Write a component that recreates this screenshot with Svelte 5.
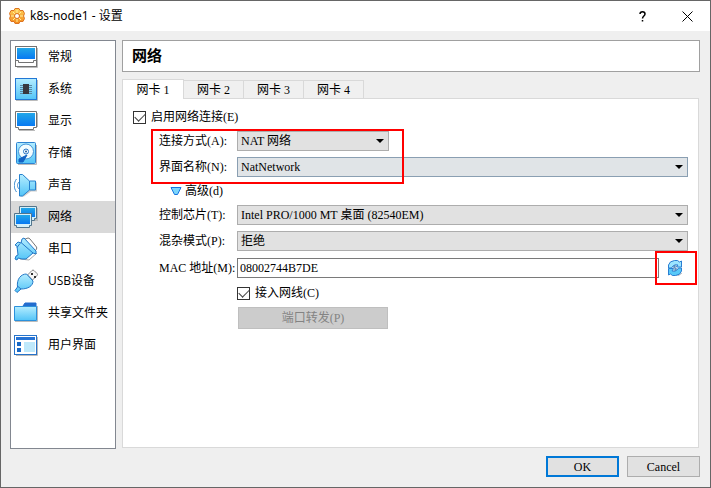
<script lang="ts">
	type IconName =
		| 'general'
		| 'system'
		| 'display'
		| 'storage'
		| 'audio'
		| 'network'
		| 'serial'
		| 'usb'
		| 'folder'
		| 'interface';

	const pages: { icon: IconName; label: string }[] = [
		{ icon: 'general', label: '常规' },
		{ icon: 'system', label: '系统' },
		{ icon: 'display', label: '显示' },
		{ icon: 'storage', label: '存储' },
		{ icon: 'audio', label: '声音' },
		{ icon: 'network', label: '网络' },
		{ icon: 'serial', label: '串口' },
		{ icon: 'usb', label: 'USB设备' },
		{ icon: 'folder', label: '共享文件夹' },
		{ icon: 'interface', label: '用户界面' }
	];

	const tabs = ['网卡 1', '网卡 2', '网卡 3', '网卡 4'];

	let page = $state('网络');
	let tab = $state(0);
	let enabled = $state(true);
	let cable = $state(true);
	let mac = $state('08002744B7DE');

	function newMac() {
		const tail = Math.floor(Math.random() * 0xffffff)
			.toString(16)
			.padStart(6, '0');
		mac = '080027' + tail.toUpperCase();
	}
</script>

{#snippet pageIcon(name: IconName)}
	<svg class="page-icon" viewBox="0 0 24 24" aria-hidden="true">
		{#if name === 'general'}
			<path d="M3 22.5h20.5V3" fill="none" stroke="#bbb" />
			<rect x="1.5" y="1.5" width="21" height="20" fill="#fff" stroke="#737373" />
			<rect x="3" y="3" width="18" height="11" fill="url(#screen)" />
			<path d="M1.5 15.5h3v2h15v-2h3" fill="none" stroke="#737373" />
		{:else if name === 'system'}
			<path d="M2 23.5h21.5V3" fill="none" stroke="#bbb" />
			<rect x="1.5" y="1.5" width="21" height="21" fill="url(#aqua)" stroke="#2277d5" />
			<path d="M6 8.5h12M6 10.5h12M6 12.5h12M6 14.5h12M6 16.5h12" stroke="#5a88a4" />
			<rect x="9" y="7" width="6" height="10" fill="#38383f" />
		{:else if name === 'display'}
			<path d="M5 21.5h16M23.5 4v14" stroke="#bbb" />
			<path d="M1.5 2.5h21v16h-3v2h-15v-2h-3z" fill="#fff" stroke="#737373" />
			<rect x="3" y="4" width="18" height="13" fill="url(#screen)" />
		{:else if name === 'storage'}
			<path d="M4 23.5h18.5V4" fill="none" stroke="#bbb" />
			<rect x="2.5" y="1.5" width="19" height="21" rx="1" fill="url(#aqua)" stroke="#2d83d2" />
			<circle cx="12" cy="10.5" r="7.5" fill="#f2fcff" stroke="#4294d8" />
			<circle cx="12" cy="10.5" r="2.5" fill="#fff" stroke="#2676c8" />
			<circle cx="12" cy="10.5" r="1" fill="#17589e" />
			<path d="M13 14l-8 4v3h4z" fill="#1262c4" stroke="#1262c4" stroke-linejoin="round" />
		{:else if name === 'audio'}
			<path d="M7 2.5h3l6 7h7v9h-6l-7 5H7z" fill="#999" opacity="0.5" />
			<path d="M5.5 1.5h3l7 6.5h6v9h-6l-7 6h-3z" fill="url(#aqua)" stroke="#2581ce" />
			<path d="M15.5 8v9" stroke="#2581ce" />
			<path d="M5 9c-2 2-2 5 0 7M2.500 6c-3 4-3 9 0 13" fill="none" stroke="#388bd1" />
		{:else if name === 'network'}
			<path d="M6 3h18v13H10" fill="#999" opacity="0.5" />
			<path d="M5.5 1.5h17v12h-2v2h-15z" fill="#d5f0fa" stroke="#52758c" />
			<rect x="7" y="3" width="14" height="9" fill="url(#screen)" />
			<path d="M.5 8.5h17v12h-2v2h-13v-2h-2z" fill="#d5f0fa" stroke="#52758c" />
			<rect x="2" y="10" width="14" height="9" fill="url(#screen)" />
		{:else if name === 'serial'}
			<path d="M6 22l9 1 8-7" fill="none" stroke="#aaa" />
			<path d="M10 2.5l4-1.500q1 0 2 1l6.500 8q.5 1 0 2l-2 3z" fill="#fff" stroke="#777" />
			<path
				d="M1 8l3-3 3 1 1-4 2-1 12 13v3l-3-1-7 6H8l-4-1-1 2-2-1 1-3 2-1-1-9z"
				fill="url(#aqua)"
				stroke="#2378c8"
				stroke-linejoin="round"
			/>
			<path d="M7 5.500l12 10.500M3 10.500l3-4" fill="none" stroke="#2378c8" />
		{:else if name === 'usb'}
			<path d="M13.500 6l4.500-4.500q1-1 2 0l3 3q1 1 0 2L18.500 11z" fill="#f7f7f7" stroke="#888" />
			<path d="M17 4h2v2h-2zM20 7h2v2h-2z" fill="#333" />
			<path
				d="M12.500 5l6.500 7c0 5-5 8-12 8l-4 3.500-2-2L3.500 18C2.500 10 7 5 12.500 5z"
				fill="url(#aqua)"
				stroke="#2378c8"
				stroke-linejoin="round"
			/>
			<path d="M4 17.500l3 2.500" stroke="#2378c8" />
		{:else if name === 'folder'}
			<path d="M1 20.5h22.5V5" fill="none" stroke="#bbb" />
			<path d="M9 5l2-3h11v4H9z" fill="#236dce" stroke="#236dce" />
			<path d="M.5 5.5h22v14H.5z" fill="url(#aqua)" stroke="#2b91dc" />
		{:else}
			<path d="M2 22.5h21.5V4" fill="none" stroke="#bbb" />
			<rect x=".5" y="2.5" width="22" height="19" fill="#fff" stroke="#2673ca" />
			<rect x="2" y="4" width="19" height="3" fill="#2673d5" />
			<path d="M3 9h4v4H3zM3 15h4v4H3z" fill="#1768c5" />
			<rect x="10" y="9" width="11" height="10" fill="#bfe9fb" />
		{/if}
	</svg>
{/snippet}

<svg class="defs" width="0" height="0" aria-hidden="true">
	<defs>
		<linearGradient id="screen" x1="0" y1="0" x2="0" y2="1">
			<stop offset="0" stop-color="#22a7e8" />
			<stop offset="1" stop-color="#0879f2" />
		</linearGradient>
		<linearGradient id="aqua" x1="0" y1="0" x2="0" y2="1">
			<stop offset="0" stop-color="#b5edff" />
			<stop offset="1" stop-color="#52c4f7" />
		</linearGradient>
		<linearGradient id="gear" x1="0" y1="0" x2="0" y2="1">
			<stop offset="0" stop-color="#ffd25b" />
			<stop offset="1" stop-color="#f38b1c" />
		</linearGradient>
	</defs>
</svg>

<div class="window">
	<header class="titlebar">
		<svg class="gear" viewBox="0 0 16 16" aria-hidden="true">
			<path
				d="M6 .5h4l1 2h3l1.500 3-1 2.500 1 2.500-1.500 3h-3l-1 2H6l-1-2H2l-1.500-3 1-2.500-1-2.500L2 2.500h3z"
				fill="url(#gear)"
				stroke="#dd7422"
				stroke-linejoin="round"
			/>
			<path d="M8 2v3M8 11v3M2 8h3M11 8h3M4 4l2 2M10 10l2 2M12 4l-2 2M4 12l2-2" stroke="#fff0a0" />
			<circle cx="8" cy="8" r="2.500" fill="#fff" stroke="#d86b18" />
		</svg>
		<h1>k8s-node1 - 设置</h1>
		<button class="caption" aria-label="Help">
			<svg viewBox="0 0 11 11" aria-hidden="true">
				<path d="M3 3c0-3 5-3 5 0 0 2-2.500 2-2.500 4.500M5.500 9v1.500" stroke-width="1.500" />
			</svg>
		</button>
		<button class="caption" aria-label="Close">
			<svg viewBox="0 0 11 11" aria-hidden="true"><path d="M.5.5l10 10M10.5.5l-10 10" /></svg>
		</button>
	</header>

	<main>
		<nav>
			{#each pages as item}
				<button class="page" class:selected={page === item.label} onclick={() => (page = item.label)}>
					{@render pageIcon(item.icon)}
					<span>{item.label}</span>
				</button>
			{/each}
		</nav>

		<section class="content">
			<h2>网络</h2>

			<div class="tabs" role="tablist">
				{#each tabs as name, i}
					<button role="tab" class="tab" class:active={tab === i} aria-selected={tab === i} onclick={() => (tab = i)}>
						{name}
					</button>
				{/each}
			</div>

			<div class="pane" role="tabpanel">
				<label class="check">
					<input type="checkbox" bind:checked={enabled} />
					启用网络连接(E)
				</label>

				<div class="form">
					<label for="attached">连接方式(A):</label>
					<div class="select short">
						<select id="attached"><option>NAT 网络</option></select>
					</div>

					<label for="name">界面名称(N):</label>
					<div class="select hot">
						<select id="name"><option>NatNetwork</option></select>
					</div>

					<button class="advanced">
						<svg viewBox="0 0 12 10" aria-hidden="true">
							<path d="M1 1.5h10L7.5 8.5h-3z" fill="#7bd5fb" stroke="#1674e0" stroke-linejoin="round" />
						</svg>
						高级(d)
					</button>

					<label for="adapter">控制芯片(T):</label>
					<div class="select">
						<select id="adapter"><option>Intel PRO/1000 MT 桌面 (82540EM)</option></select>
					</div>

					<label for="promiscuous">混杂模式(P):</label>
					<div class="select">
						<select id="promiscuous"><option>拒绝</option></select>
					</div>

					<label for="mac">MAC 地址(M):</label>
					<div class="mac">
						<input id="mac" type="text" bind:value={mac} />
						<button class="refresh" aria-label="Refresh" onclick={newMac}>
							<svg viewBox="0 0 16 16" aria-hidden="true">
								<path d="M5 16h6l4-3" fill="none" stroke="#bbb" />
								<path
									d="M1.500 8V5q1-4 6-4.500h3l2 1.500 2-1v6h-5l1.500-2q-3-1-5 1L4.500 8z"
									fill="#9ce5ff"
									stroke="#2b7fd3"
									stroke-linejoin="round"
								/>
								<path
									d="M14.500 8v3q-1 4-6 4.500h-3l-2-1.500-2 1V8.500h5L5 11q3 1 5-1l1.500-2z"
									fill="#58c9f8"
									stroke="#2b7fd3"
									stroke-linejoin="round"
								/>
								<path d="M9.500 6H7v2h2v2H6.500" fill="none" stroke="#286fac" />
							</svg>
							<span class="mark"></span>
						</button>
					</div>

					<label class="check second">
						<input type="checkbox" bind:checked={cable} />
						接入网线(C)
					</label>

					<button class="forward" disabled>端口转发(P)</button>

					<span class="mark fields"></span>
				</div>
			</div>
		</section>
	</main>

	<footer>
		<button class="push default">OK</button>
		<button class="push">Cancel</button>
	</footer>
</div>

<style>
	:global(body) {
		margin: 0;
	}

	.defs {
		position: absolute;
	}

	.window,
	.window * {
		box-sizing: border-box;
	}

	.window {
		display: flex;
		flex-direction: column;
		min-height: 100vh;
		border: 1px solid #666;
		background: #efefef;
		color: #000;
		font: 12px/16px 'Liberation Serif', 'Noto Sans CJK SC', serif;
	}

	button,
	input,
	select {
		margin: 0;
		padding: 0;
		border: 0;
		background: none;
		color: inherit;
		font: inherit;
	}

	.titlebar {
		display: flex;
		align-items: center;
		height: 30px;
		padding-left: 8px;
		background: #fff;
		font-family: 'Noto Sans', 'Noto Sans CJK SC', sans-serif;
	}

	.gear {
		width: 16px;
		height: 16px;
	}

	h1 {
		flex: 1;
		margin: 0 0 0 5px;
		font-size: 12px;
		font-weight: 400;
	}

	.caption {
		display: grid;
		place-items: center;
		width: 45px;
		height: 30px;
	}

	.caption svg {
		width: 11px;
		height: 11px;
		fill: none;
		stroke: #000;
	}

	main {
		display: flex;
		flex: 1;
		gap: 6px;
		padding: 9px 10px 0 9px;
	}

	nav {
		flex: none;
		width: 106px;
		border: 1px solid #828790;
		background: #fff;
		font-family: 'Open Sans', 'Noto Sans CJK SC', sans-serif;
	}

	.page {
		display: flex;
		align-items: center;
		gap: 10px;
		width: 100%;
		height: 32px;
		padding-left: 3px;
	}

	.page.selected {
		background: #d9d9d9;
	}

	.page-icon {
		flex: none;
		width: 24px;
		height: 24px;
	}

	.content {
		display: flex;
		flex: 1;
		flex-direction: column;
		min-width: 0;
	}

	h2 {
		margin: 0 0 7px;
		padding: 0 9px;
		border: 1px solid #a0a0a0;
		background: #fff;
		font-size: 15px;
		font-weight: 700;
		line-height: 30px;
	}

	.tabs {
		display: flex;
		align-items: flex-end;
		z-index: 1;
	}

	.tab {
		width: 61px;
		height: 18px;
		margin-left: -1px;
		border: 1px solid #d9d9d9;
		border-bottom: 0;
		background: #f0f0f0;
		line-height: 16px;
		word-spacing: normal;
	}

	.tab.active {
		width: 62px;
		height: 20px;
		margin: 0 0 -1px;
		background: #fff;
	}

	.pane {
		flex: 1;
		margin: 0 1px 1px 0;
		padding: 10px;
		border: 1px solid #d9d9d9;
		background: #fff;
	}

	.check {
		display: flex;
		align-items: center;
		gap: 5px;
		height: 16px;
	}

	.check input {
		display: grid;
		place-items: center;
		width: 13px;
		height: 13px;
		border: 1px solid #333;
		background: #fff;
		appearance: none;
	}

	.check input:checked::before {
		content: '';
		width: 9px;
		height: 5px;
		margin-bottom: 2px;
		border: solid #444;
		border-width: 0 0 1px 1px;
		transform: rotate(-45deg);
	}

	.form {
		position: relative;
		display: grid;
		grid-template-columns: 72px minmax(0, 1fr);
		gap: 6px;
		align-items: center;
		margin: 6px 0 0 26px;
		white-space: nowrap;
	}

	.select {
		position: relative;
		height: 20px;
	}

	.select::after {
		content: '';
		position: absolute;
		top: 8px;
		right: 5px;
		border: solid transparent;
		border-width: 4px 4px 0;
		border-top-color: #000;
		pointer-events: none;
	}

	.select.short {
		width: 152px;
	}

	select {
		display: block;
		width: 100%;
		height: 20px;
		padding: 0 16px 0 3px;
		border: 1px solid #adadad;
		border-radius: 0;
		background: #e1e1e1;
		appearance: none;
	}

	.hot select {
		border-color: #8a9fb2;
		background: #e0e4e7;
	}

	.advanced {
		display: flex;
		grid-column: 1 / -1;
		align-items: center;
		gap: 3px;
		height: 16px;
		padding-left: 11px;
	}

	.advanced svg {
		width: 12px;
		height: 10px;
	}

	.mac {
		display: flex;
		align-items: center;
		gap: 8px;
		height: 22px;
		padding-right: 5px;
	}

	.mac input {
		flex: 1;
		min-width: 0;
		height: 20px;
		padding: 0 2px;
		border: 1px solid #7a7a7a;
		background: #fff;
	}

	.refresh {
		position: relative;
		width: 16px;
		height: 16px;
	}

	.refresh svg {
		display: block;
		width: 16px;
		height: 16px;
	}

	.second {
		grid-column: 2;
	}

	.forward {
		grid-column: 2;
		width: 150px;
		height: 22px;
		margin-left: 1px;
		border: 1px solid #bfbfbf;
		background: #ccc;
		color: #838383;
	}

	.mark {
		position: absolute;
		inset: -9px -14px -9px -12px;
		border: 2px solid #f00;
		pointer-events: none;
	}

	.mark.fields {
		inset: -2px auto auto -8px;
		width: 253px;
		height: 55px;
	}

	footer {
		display: flex;
		justify-content: flex-end;
		gap: 8px;
		padding: 7px 10px 10px;
	}

	.push {
		width: 73px;
		height: 21px;
		border: 1px solid #adadad;
		background: #e1e1e1;
	}

	.push.default {
		border: 2px solid #0078d7;
	}
</style>
